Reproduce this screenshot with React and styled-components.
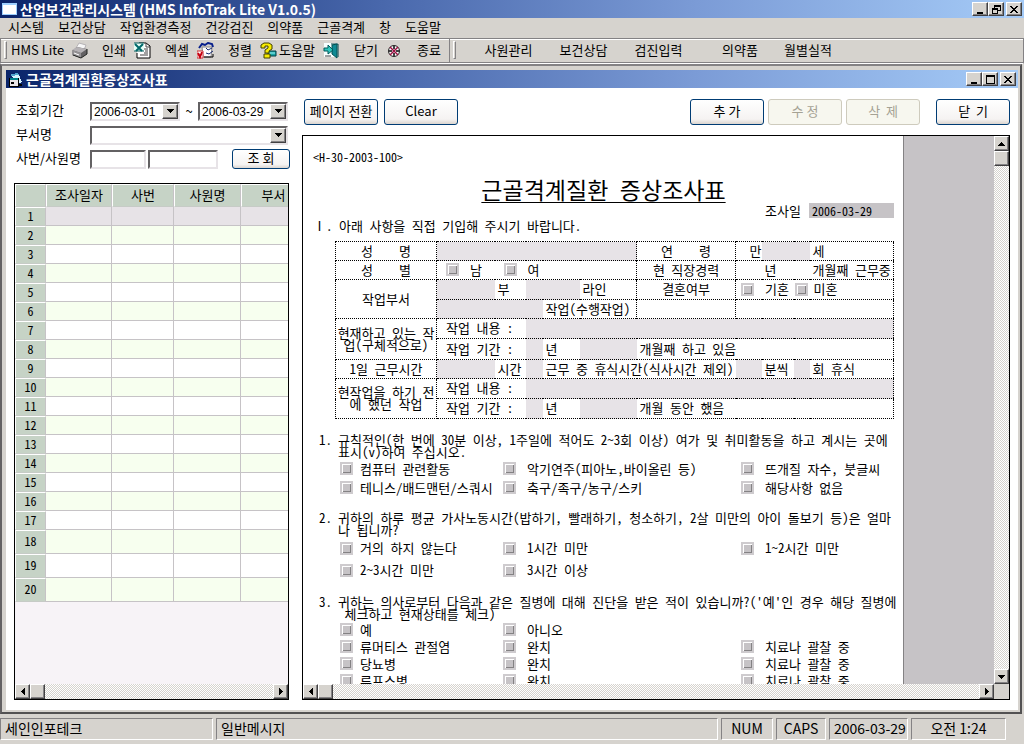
import { Fragment } from 'react';
import styled, { createGlobalStyle, css } from 'styled-components';

const GlobalStyle = createGlobalStyle`
  * {
    box-sizing: border-box;
  }

  body {
    margin: 0;
    background: #d6d3ce;
    color: #000;
    font-family: 'Noto Sans CJK KR', 'Liberation Sans', sans-serif;
    font-size: 13px;
    line-height: 16px;
  }

  button,
  input,
  select {
    font: inherit;
    color: inherit;
    margin: 0;
    padding: 0;
    border: 0;
    border-radius: 0;
  }
`;

const raised = css`
  background: #d6d3ce;
  border: 1px solid;
  border-color: #fff #424142 #424142 #fff;
  box-shadow: inset -1px -1px #848284;
`;

const sunken = css`
  background: #fff;
  border: 2px solid;
  border-color: #636163 #e7e3e7 #e7e3e7 #636163;
`;

const dither = css`
  background: repeating-conic-gradient(#fff 0 25%, #d6d3ce 0 50%) 0 0 / 2px 2px;
`;

/* ---------- frame ---------- */

const Shell = styled.div`
  display: flex;
  flex-direction: column;
  height: 100vh;
  overflow: hidden;
  white-space: nowrap;
`;

const TitleBar = styled.header`
  display: flex;
  align-items: center;
  gap: 3px;
  height: 18px;
  padding: 0 2px;
  flex: none;
  color: #fff;
  font-size: 14px;
  font-weight: 700;
  background: linear-gradient(90deg, #0a246a, #4a69ad 38%, #7b9bd6 68%, #a5cbf7);

  h1,
  h2 {
    flex: 1;
    margin: 0;
    font: inherit;
    line-height: 18px;
  }

  svg {
    flex: none;
  }
`;

const WindowButtons = styled.div`
  display: flex;

  button:last-child {
    margin-left: 2px;
  }
`;

const WindowButton = styled.button`
  ${raised}
  display: grid;
  place-items: center;
  width: 16px;
  height: 14px;
`;

const MenuBar = styled.nav`
  display: flex;
  gap: 14px;
  height: 20px;
  padding: 0 8px 2px;
  flex: none;

  button {
    background: none;
  }
`;

const ToolBar = styled.div`
  display: flex;
  height: 26px;
  flex: none;
  border: 1px solid;
  border-color: #848284 #848284 #fff;
  box-shadow: inset 0 1px #fff, inset 0 -1px #848284;
`;

const Band = styled.div`
  display: flex;
  align-items: center;
  gap: 8px;
  padding: 0 8px 2px 3px;
  border-right: ${(p) => (p.$divided ? '1px solid #848284' : '0')};
`;

const Grip = styled.span`
  width: 3px;
  height: 18px;
  border: 1px solid;
  border-color: #fff #848284 #848284 #fff;
`;

const BandTitle = styled.span`
  width: 52px;
  margin-left: -4px;
`;

const ToolButton = styled.button`
  display: flex;
  align-items: center;
  justify-content: space-between;
  width: 55px;
  background: none;
`;

const Shortcuts = styled.div`
  display: flex;
  margin-left: 7px;
`;

const Shortcut = styled.button`
  width: ${(p) => p.$width}px;
  background: none;
`;

const Workspace = styled.main`
  display: flex;
  flex-direction: column;
  flex: 1;
  min-height: 0;
  margin: 0 2px 2px 0;
  border: 2px solid;
  border-color: #848284 #525152 #525152 #636163;
`;

const ChildWindow = styled.section`
  display: flex;
  flex-direction: column;
  flex: 1;
  min-height: 0;
  border: solid #d6d3ce;
  border-width: 4px 2px 2px 4px;
`;

const ChildBody = styled.div`
  display: flex;
  gap: 12px;
  flex: 1;
  min-height: 0;
  padding: 11px 8px 10px;
  background: #fff;
`;

const StatusBar = styled.footer`
  display: flex;
  gap: 3px;
  height: 28px;
  padding: 2px 18px 4px 0;
  flex: none;
  font-size: 14px;
`;

const StatusCell = styled.span`
  width: ${(p) => (p.$width ? `${p.$width}px` : 'auto')};
  flex: ${(p) => (p.$width ? 'none' : 1)};
  padding: 1px 4px;
  text-align: ${(p) => p.$align || 'left'};
  border: 1px solid;
  border-color: #848284 #fff #fff #848284;
`;

/* ---------- shared controls ---------- */

const PushButton = styled.button`
  width: ${(p) => p.$width || 74}px;
  height: ${(p) => p.$height || 26}px;
  flex: none;
  padding-bottom: 2px;
  border: 1px solid #003c74;
  border-radius: 3px;
  background: linear-gradient(#fff, #f5f3f2 80%, #dcd6d0);

  &:disabled {
    color: #a5a294;
    border-color: #cecbbd;
    background: #f7f7ef;
  }
`;

const ComboBox = styled.div`
  ${sunken}
  display: flex;
  width: ${(p) => (p.$wide ? '198px' : '90px')};
  height: 19px;

  select {
    flex: 1;
    min-width: 0;
    padding-left: 2px;
    appearance: none;
    background: none;
    font-family: 'Liberation Sans', sans-serif;
    font-size: 12px;
  }
`;

const ArrowBox = styled.span`
  ${raised}
  display: grid;
  place-items: center;
  width: 16px;
`;

const TextBox = styled.input`
  ${sunken}
  width: ${(p) => p.$width}px;
  height: 19px;
`;

const ScrollTrack = styled.div`
  ${dither}
  display: flex;
  flex-direction: ${(p) => (p.$vertical ? 'column' : 'row')};
  flex: none;
  min-width: 15px;
  min-height: 15px;
`;

const ScrollButton = styled.button`
  ${raised}
  display: grid;
  place-items: center;
  width: 15px;
  height: 15px;

  &:last-child {
    margin-left: ${(p) => (p.$vertical ? 0 : 'auto')};
    margin-top: ${(p) => (p.$vertical ? 'auto' : 0)};
  }
`;

const ScrollThumb = styled.span`
  ${raised}
  width: 15px;
  height: 15px;
`;

/* ---------- left panel ---------- */

const SidePanel = styled.aside`
  display: flex;
  flex-direction: column;
  width: 276px;
  flex: none;
  padding-top: 2px;
`;

const Filters = styled.form`
  display: grid;
  grid-template-columns: 74px 1fr;
  grid-auto-rows: 20px;
  row-gap: 4px;
  align-items: center;
  padding-left: 2px;

  > label {
    padding-bottom: 2px;
  }
`;

const FilterFields = styled.div`
  display: flex;
  align-items: center;
  gap: ${(p) => p.$gap || 0}px;

  button {
    margin-left: auto;
  }
`;

const Tilde = styled.span`
  width: 18px;
  text-align: center;
`;

const GridFrame = styled.div`
  display: flex;
  flex-direction: column;
  flex: 1;
  min-height: 0;
  width: 275px;
  margin-top: 14px;
  border: 1px solid #000;
  background: #f7f3f7;
`;

const GridScroll = styled.div`
  flex: 1;
  overflow: hidden;
`;

const RecordTable = styled.table`
  width: 291px;
  table-layout: fixed;
  border-collapse: separate;
  border-spacing: 0;

  th {
    padding: 0 0 2px;
    font-weight: 400;
    background: #c6d3c6;
    border: 1px solid;
    border-color: #fff #c6c3c6 #c6cbc6 #fff;
  }

  thead th {
    height: 23px;
  }

  tbody th {
    font-family: 'Noto Sans Mono CJK KR', 'Liberation Sans', sans-serif;
    font-size: 12px;
    line-height: 14px;
  }

  td {
    padding: 0;
    border: solid #c6c3c6;
    border-width: 0 1px 1px 0;
  }
`;

const RecordRow = styled.tr`
  height: ${(p) => (p.$tall ? 24 : 19)}px;
  background: ${(p) => (p.$current ? '#e7e3e7' : p.$even ? '#f7ffef' : '#fff')};
`;

/* ---------- right panel ---------- */

const MainPanel = styled.div`
  display: flex;
  flex-direction: column;
  flex: 1;
  min-width: 0;
`;

const Actions = styled.div`
  display: flex;
  gap: 4px;
  padding-left: 2px;
  margin-bottom: 10px;
`;

const ActionGroup = styled.div`
  display: flex;
  gap: ${(p) => p.$gap || 4}px;
  margin-left: ${(p) => (p.$end ? 'auto' : 0)};
`;

const LastAction = styled.div`
  margin-left: 12px;
`;

const FormFrame = styled.div`
  display: grid;
  grid-template-columns: minmax(0, 1fr) 15px;
  grid-template-rows: minmax(0, 1fr) 15px;
  flex: 1;
  min-height: 0;
  border: 1px solid #000;
  background: #d6d3ce;
`;

const FormViewport = styled.div`
  overflow: hidden;
  background: #c6c3c6;
`;

const Paper = styled.article`
  width: 601px;
  min-height: 100%;
  padding: 13px 9px 0 10px;
  border-right: 1px solid #848284;
  background: #fff;
  font-family: 'Noto Sans Mono CJK KR', 'Noto Sans CJK KR', sans-serif;
`;

const FormCode = styled.div`
  font-size: 12px;
  line-height: 16px;
`;

const FormTitle = styled.h3`
  margin: 12px 0 2px;
  font-size: 23px;
  font-weight: 400;
  line-height: 24px;
  text-align: center;
  text-decoration: underline;
  text-decoration-thickness: 1px;
  text-decoration-skip-ink: none;
  text-underline-offset: 3px;
`;

const SurveyDate = styled.label`
  display: flex;
  justify-content: flex-end;
  gap: 8px;
  line-height: 15px;

  input {
    width: 85px;
    height: 15px;
    padding-left: 3px;
    background: #c6c3c6;
    font-size: 12px;
  }
`;

const Intro = styled.p`
  margin: 0 0 7px;
`;

const FormTable = styled.table`
  width: 558px;
  margin-left: 22px;
  table-layout: fixed;
  border-collapse: collapse;
  border: 1px dotted #000;
  line-height: 12px;
`;

const FormRow = styled.tr`
  height: ${(p) => p.$height || 19}px;
`;

const Cell = styled.td`
  padding: 0 0 1px ${(p) => p.$indent ?? 3}px;
  border-top: 1px dotted #000;
  border-left: ${(p) => (p.$ruled ? '1px dotted #000' : '0')};
  text-align: ${(p) => p.$align || 'left'};
`;

const HeadCell = styled.th`
  padding: 0 0 1px;
  border: 1px dotted #000;
  font-weight: 400;
  white-space: pre;
`;

const FillCell = styled(Cell)`
  padding: 0;
  background: #e7e3e7;

  input {
    display: block;
    width: 100%;
    height: 16px;
    background: none;
  }
`;

const CheckLabel = styled.label`
  display: flex;
  align-items: center;
  gap: ${(p) => p.$gap || 11}px;
`;

const Tick = styled.input`
  appearance: none;
  width: 13px;
  height: 13px;
  flex: none;
  border: 2px solid #cecbce;
  background: #c6c3c6;
  box-shadow: inset 1px 1px #fff, inset -1px -1px #848284;
`;

const Question = styled.section`
  margin-top: 15px;
  padding-left: 6px;
`;

const QuestionText = styled.div`
  display: flex;
  line-height: 12px;

  span {
    width: 19px;
    flex: none;
  }

  p {
    margin: 0;
    white-space: pre;
  }
`;

const Options = styled.div`
  display: grid;
  grid-template-columns: 163px 238px 1fr;
  grid-auto-rows: ${(p) => p.$rowHeight}px;
  align-items: center;
  padding: 1px 0 0 21px;
`;

/* ---------- drawings ---------- */

const ARROWS = {
  up: 'M3 0h1v1h1v1h1v1h1v1H0V3h1V2h1V1h1z',
  down: 'M0 0h7v1H6v1H5v1H4v1H3V3H2V2H1V1H0z',
  left: 'M4 0v7H3V6H2V5H1V4H0V3h1V2h1V1h1V0z',
  right: 'M0 0h1v1h1v1h1v1h1v1H3v1H2v1H1v1H0z',
};

function Arrow({ dir }) {
  const flat = dir === 'up' || dir === 'down';
  return (
    <svg width={flat ? 7 : 4} height={flat ? 4 : 7} shapeRendering="crispEdges" aria-hidden="true">
      <path d={ARROWS[dir]} />
    </svg>
  );
}

const GLYPHS = {
  minimize: <path d="M1 7h6v2H1z" />,
  maximize: <path d="M0 0h9v9H0zM1 2v6h7V2z" fillRule="evenodd" />,
  restore: <path d="M2 0h7v6H6v3H0V3h2zM3 2v1h3v2h2V2zM1 5v3h4V5z" fillRule="evenodd" />,
  close: <path d="M0 1h2v1h1v1h2V2h1V1h2v1H7v1H6v1H5v1h1v1h1v1h1v1H6V7H5V6H3v1H2v1H0V7h1V6h1V5h1V4H2V3H1V2H0z" />,
};

function Controls({ middle }) {
  return (
    <WindowButtons>
      {['minimize', middle, 'close'].map((name) => (
        <WindowButton key={name} aria-label={name}>
          <svg width="9" height="9" shapeRendering="crispEdges">
            {GLYPHS[name]}
          </svg>
        </WindowButton>
      ))}
    </WindowButtons>
  );
}

function ToolIcon({ name }) {
  return (
    <svg width="17" height="17" viewBox="0 0 17 17" aria-hidden="true">
      {name === 'print' && (
        <>
          <path d="M5 6 8 1l7 2-2 5z" fill="#f7f7f7" stroke="#b5b2b5" />
          <path d="m1 9 5-4 10 2v5l-6 4L1 13z" fill="#636163" />
          <path d="m1 8 5-3 10 2-6 4z" fill="#b5b2b5" />
          <path d="M1 8v5l9 3v-5z" fill="#949294" />
          <path d="m2 13 8 3 6-4V7" fill="none" stroke="#212421" />
          <path d="m3 11 5 2" stroke="#fff" />
        </>
      )}
      {name === 'excel' && (
        <>
          <path d="M5 1h7l4 3v12H3v-5" fill="#fff" stroke="#000" />
          <path d="M12 1v4h4M6 13h8M10 7h4M11 9h3M10 11h4" fill="none" stroke="#424142" />
          <path d="M0 1h10v8H0z" fill="#e7fff7" />
          <path d="M0 1h10M0 9h10" stroke="#085a5a" />
          <path d="m1 2 7 7M9 2 2 9" stroke="#00696b" strokeWidth="2" />
        </>
      )}
      {name === 'sort' && (
        <>
          <path d="M5 5h10l-1 10H6z" fill="#fff" stroke="#848284" />
          <path d="m2 6 3-4 3 1 3-2 4 1 1 3" fill="none" stroke="#08208c" strokeWidth="2" />
          <path d="m9 6 2 2 4-2M9 11l3 1 4-3" fill="none" stroke="#182c73" />
          <path d="M7 15h9v-3" fill="none" stroke="#000" />
          <path d="M0 9h6v7H0z" fill="#fff" stroke="#ce2c31" />
          <path d="m1 11 2 4 2-5" fill="none" stroke="#c60010" strokeWidth="2" />
        </>
      )}
      {name === 'help' && (
        <>
          <path d="M8 9h8v5H8z" fill="#18a6a5" stroke="#003c42" />
          <path d="M9 11h6" stroke="#9cf3f7" />
          <path d="M1 6V3l3-2h5l3 2v4L9 9v2H5V8l3-2V4H5v2z" fill="#f7eb00" stroke="#424100" />
          <path d="M4 12h6v4H4z" fill="#f7eb00" stroke="#424100" />
        </>
      )}
      {name === 'door' && (
        <>
          <path d="M1 1h14v14H1z" fill="#f7ffff" />
          <path d="M8 2h7v13" fill="none" stroke="#003c42" />
          <path d="m9 3 5-1v14l-5-4z" fill="#108a94" stroke="#005152" />
          <path d="M1 6h4V3l5 5-5 4v-3H1z" fill="#31c7bd" stroke="#00595a" />
          <path d="M2 14h6" stroke="#424142" />
        </>
      )}
      {name === 'quit' && (
        <>
          <circle cx="8" cy="9" r="5.5" fill="#fff" stroke="#212021" />
          <path d="M8 4v3M8 11v3M3 9h3M10 9h3" stroke="#424142" strokeWidth="2" />
          <path d="m4 5 8 8M12 5l-8 8" stroke="#9c1042" strokeWidth="1.5" />
        </>
      )}
    </svg>
  );
}

function AppIcon() {
  return (
    <svg width="15" height="14" shapeRendering="crispEdges" aria-hidden="true">
      <path d="M0 1h15v12H0z" fill="#9ccfff" />
      <path d="M1 3h13v9H1z" fill="#fff" />
    </svg>
  );
}

function FormIcon() {
  return (
    <svg width="15" height="15" shapeRendering="crispEdges" aria-hidden="true">
      <path d="m3 2 7-1 4 9-5 3z" fill="#d6f3ff" />
      <path d="m3 2 7-1 1 2-8 1z" fill="#52a6ce" />
      <path d="M1 6h9v8H1z" fill="#e7e3e7" stroke="#000" />
      <path d="M2 6h8v2H2z" fill="#00828c" />
      <path d="M3 10h3v2H3z" fill="#000" />
      <path d="M10 12h4v2h-4z" fill="#000" />
    </svg>
  );
}

/* ---------- pieces ---------- */

function ScrollBar({ vertical = false }) {
  return (
    <ScrollTrack $vertical={vertical}>
      <ScrollButton $vertical={vertical} aria-label={vertical ? 'up' : 'left'}>
        <Arrow dir={vertical ? 'up' : 'left'} />
      </ScrollButton>
      <ScrollThumb />
      <ScrollButton $vertical={vertical} aria-label={vertical ? 'down' : 'right'}>
        <Arrow dir={vertical ? 'down' : 'right'} />
      </ScrollButton>
    </ScrollTrack>
  );
}

function Combo({ id, label, value = '', wide }) {
  return (
    <ComboBox $wide={wide}>
      <select id={id} aria-label={label} defaultValue={value}>
        <option>{value}</option>
      </select>
      <ArrowBox>
        <Arrow dir="down" />
      </ArrowBox>
    </ComboBox>
  );
}

function Check({ children, gap }) {
  return (
    <CheckLabel $gap={gap}>
      <Tick type="checkbox" />
      {children}
    </CheckLabel>
  );
}

function Fill({ label, span = 1, ruled }) {
  return (
    <FillCell colSpan={span} $ruled={ruled}>
      <input aria-label={label} />
    </FillCell>
  );
}

const MENUS = ['시스템', '보건상담', '작업환경측정', '건강검진', '의약품', '근골격계', '창', '도움말'];

const TOOLS = [
  ['print', '인쇄'],
  ['excel', '엑셀'],
  ['sort', '정렬'],
  ['help', '도움말'],
  ['door', '닫기'],
  ['quit', '종료'],
];

const SHORTCUTS = [
  ['사원관리', 75],
  ['보건상담', 75],
  ['검진입력', 75],
  ['의약품', 88],
  ['월별실적', 48],
];

const COLUMNS = [101, 58, 31, 17, 37, 57, 99, 26, 32, 16, 84];

const QUESTIONS = [
  {
    text: '규칙적인(한 번에 30분 이상, 1주일에 적어도 2~3회 이상) 여가 및 취미활동을 하고 계시는 곳에\n표시(v)하여 주십시오.',
    rowHeight: 19,
    options: [
      ['컴퓨터 관련활동', '악기연주(피아노,바이올린 등)', '뜨개질 자수, 붓글씨'],
      ['테니스/배드맨턴/스쿼시', '축구/족구/농구/스키', '해당사항 없음'],
    ],
  },
  {
    text: '귀하의 하루 평균 가사노동시간(밥하기, 빨래하기, 청소하기, 2살 미만의 아이 돌보기 등)은 얼마\n나 됩니까?',
    rowHeight: 22,
    options: [
      ['거의 하지 않는다', '1시간 미만', '1~2시간 미만'],
      ['2~3시간 미만', '3시간 이상', null],
    ],
  },
  {
    text: "귀하는 의사로부터 다음과 같은 질병에 대해 진단을 받은 적이 있습니까?('예'인 경우 해당 질병에\n 체크하고 현재상태를 체크)",
    rowHeight: 17,
    options: [
      ['예', '아니오', null],
      ['류머티스 관절염', '완치', '치료나 괄찰 중'],
      ['당뇨병', '완치', '치료나 괄찰 중'],
      ['루프스병', '완치', '치료나 괄찰 중'],
    ],
  },
];

function RecordGrid() {
  return (
    <GridFrame>
      <GridScroll>
        <RecordTable>
          <colgroup>
            <col width="31" />
            <col width="66" />
            <col width="62" />
            <col width="67" />
            <col width="65" />
          </colgroup>
          <thead>
            <tr>
              <th />
              <th>조사일자</th>
              <th>사번</th>
              <th>사원명</th>
              <th>부서</th>
            </tr>
          </thead>
          <tbody>
            {Array.from({ length: 20 }, (_, i) => (
              <RecordRow key={i} $current={i === 0} $even={i % 2 === 1} $tall={i > 16}>
                <th>{i + 1}</th>
                <td />
                <td />
                <td />
                <td />
              </RecordRow>
            ))}
          </tbody>
        </RecordTable>
      </GridScroll>
      <ScrollBar />
    </GridFrame>
  );
}

function PersonalTable() {
  return (
    <FormTable>
      <colgroup>
        {COLUMNS.map((width, i) => (
          <col key={i} width={width} />
        ))}
      </colgroup>
      <tbody>
        <FormRow>
          <HeadCell>{'성    명'}</HeadCell>
          <Fill label="성명" span={5} ruled />
          <HeadCell>{'연    령'}</HeadCell>
          <Cell $align="right">만</Cell>
          <Fill label="연령" span={2} />
          <Cell>세</Cell>
        </FormRow>
        <FormRow>
          <HeadCell>{'성    별'}</HeadCell>
          <Cell $indent={9}>
            <Check>남</Check>
          </Cell>
          <Cell colSpan={4} $indent={9}>
            <Check>여</Check>
          </Cell>
          <HeadCell>현 직장경력</HeadCell>
          <Cell />
          <Cell colSpan={2}>년</Cell>
          <Cell>개월째 근무중</Cell>
        </FormRow>
        <FormRow $height={20}>
          <HeadCell rowSpan={2}>작업부서</HeadCell>
          <Fill label="부" ruled />
          <Cell>부</Cell>
          <Fill label="라인" span={2} />
          <Cell>라인</Cell>
          <HeadCell>결혼여부</HeadCell>
          <Cell colSpan={2} $indent={5}>
            <Check>기혼</Check>
          </Cell>
          <Cell colSpan={2} $indent={1}>
            <Check gap={6}>미혼</Check>
          </Cell>
        </FormRow>
        <FormRow>
          <Fill label="수행작업" span={3} ruled />
          <Cell colSpan={2}>작업(수행작업)</Cell>
          <HeadCell />
          <Cell colSpan={4} />
        </FormRow>
        <FormRow $height={20}>
          <HeadCell rowSpan={2}>{'현재하고 있는 작\n업(구체적으로)'}</HeadCell>
          <Cell colSpan={2} $indent={9}>작업 내용 :</Cell>
          <Fill label="현재 작업 내용" span={8} />
        </FormRow>
        <FormRow $height={21}>
          <Cell colSpan={2} $indent={9}>작업 기간 :</Cell>
          <Fill label="현재 작업 년" />
          <Cell>년</Cell>
          <Fill label="현재 작업 개월" />
          <Cell colSpan={5}>개월째 하고 있음</Cell>
        </FormRow>
        <FormRow>
          <HeadCell>1일 근무시간</HeadCell>
          <Fill label="근무시간" ruled />
          <Cell>시간</Cell>
          <Fill label="휴식시간" />
          <Cell colSpan={3}>근무 중 휴식시간(식사시간 제외)</Cell>
          <Fill label="분" />
          <Cell>분씩</Cell>
          <Fill label="회" />
          <Cell>회 휴식</Cell>
        </FormRow>
        <FormRow $height={20}>
          <HeadCell rowSpan={2}>{'현작업을 하기 전\n에 했던 작업'}</HeadCell>
          <Cell colSpan={2} $indent={9}>작업 내용 :</Cell>
          <Fill label="이전 작업 내용" span={8} />
        </FormRow>
        <FormRow $height={20}>
          <Cell colSpan={2} $indent={9}>작업 기간 :</Cell>
          <Fill label="이전 작업 년" />
          <Cell>년</Cell>
          <Fill label="이전 작업 개월" />
          <Cell colSpan={5}>개월 동안 했음</Cell>
        </FormRow>
      </tbody>
    </FormTable>
  );
}

function SurveyForm() {
  return (
    <Paper>
      <FormCode>&lt;H-30-2003-100&gt;</FormCode>
      <FormTitle>근골격계질환 증상조사표</FormTitle>
      <SurveyDate>
        조사일
        <input defaultValue="2006-03-29" />
      </SurveyDate>
      <Intro>Ⅰ. 아래 사항을 직접 기입해 주시기 바랍니다.</Intro>
      <PersonalTable />
      {QUESTIONS.map((question, i) => (
        <Question key={i}>
          <QuestionText>
            <span>{i + 1}.</span>
            <p>{question.text}</p>
          </QuestionText>
          <Options $rowHeight={question.rowHeight}>
            {question.options.map((row, r) => (
              <Fragment key={r}>
                {row.map((option, c) =>
                  option ? (
                    <Check key={c} gap={c === 0 ? 7 : 11}>
                      {option}
                    </Check>
                  ) : (
                    <span key={c} />
                  )
                )}
              </Fragment>
            ))}
          </Options>
        </Question>
      ))}
    </Paper>
  );
}

export default function App() {
  return (
    <Shell>
      <GlobalStyle />
      <TitleBar>
        <AppIcon />
        <h1>산업보건관리시스템 (HMS InfoTrak Lite V1.0.5)</h1>
        <Controls middle="restore" />
      </TitleBar>

      <MenuBar>
        {MENUS.map((menu) => (
          <button key={menu}>{menu}</button>
        ))}
      </MenuBar>

      <ToolBar>
        <Band $divided>
          <Grip />
          <BandTitle>HMS Lite</BandTitle>
          {TOOLS.map(([icon, label]) => (
            <ToolButton key={icon}>
              <ToolIcon name={icon} />
              {label}
            </ToolButton>
          ))}
        </Band>
        <Band>
          <Grip />
          <Shortcuts>
            {SHORTCUTS.map(([label, width]) => (
              <Shortcut key={label} $width={width}>
                {label}
              </Shortcut>
            ))}
          </Shortcuts>
        </Band>
      </ToolBar>

      <Workspace>
        <ChildWindow>
          <TitleBar as="div">
            <FormIcon />
            <h2>근골격계질환증상조사표</h2>
            <Controls middle="maximize" />
          </TitleBar>
          <ChildBody>
            <SidePanel>
              <Filters onSubmit={(e) => e.preventDefault()}>
                <label htmlFor="from">조회기간</label>
                <FilterFields>
                  <Combo id="from" value="2006-03-01" />
                  <Tilde>~</Tilde>
                  <Combo id="to" label="조회기간 종료" value="2006-03-29" />
                </FilterFields>
                <label htmlFor="dept">부서명</label>
                <FilterFields>
                  <Combo id="dept" wide />
                </FilterFields>
                <label htmlFor="empNo">사번/사원명</label>
                <FilterFields $gap={2}>
                  <TextBox id="empNo" $width={56} />
                  <TextBox aria-label="사원명" $width={70} />
                  <PushButton $width={58} $height={20}>조 회</PushButton>
                </FilterFields>
              </Filters>
              <RecordGrid />
            </SidePanel>

            <MainPanel>
              <Actions>
                <ActionGroup $gap={6}>
                  <PushButton>페이지 전환</PushButton>
                  <PushButton>Clear</PushButton>
                </ActionGroup>
                <ActionGroup $end>
                  <PushButton>추 가</PushButton>
                  <PushButton disabled>수 정</PushButton>
                  <PushButton disabled>삭&nbsp; 제</PushButton>
                </ActionGroup>
                <LastAction>
                  <PushButton>닫&nbsp; 기</PushButton>
                </LastAction>
              </Actions>
              <FormFrame>
                <FormViewport>
                  <SurveyForm />
                </FormViewport>
                <ScrollBar vertical />
                <ScrollBar />
              </FormFrame>
            </MainPanel>
          </ChildBody>
        </ChildWindow>
      </Workspace>

      <StatusBar>
        <StatusCell $width={213}>세인인포테크</StatusCell>
        <StatusCell>일반메시지</StatusCell>
        <StatusCell $width={52} $align="center">NUM</StatusCell>
        <StatusCell $width={50} $align="center">CAPS</StatusCell>
        <StatusCell $width={79} $align="center">2006-03-29</StatusCell>
        <StatusCell $width={95} $align="center">오전 1:24</StatusCell>
      </StatusBar>
    </Shell>
  );
}
